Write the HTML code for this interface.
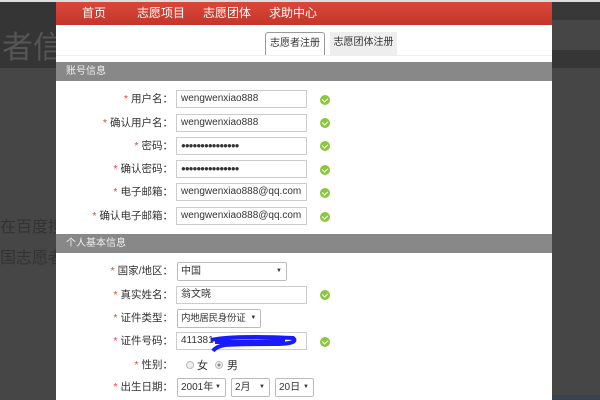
<!DOCTYPE html>
<html><head><meta charset="utf-8"><style>
*{margin:0;padding:0;box-sizing:border-box}
body{width:600px;height:400px;overflow:hidden;background:#464646;font-family:"Liberation Sans","Noto Sans CJK SC",sans-serif;position:relative}
.a{position:absolute}
.lbl{position:absolute;right:427px;font-size:10.5px;color:#333;white-space:nowrap;line-height:14px}
.lbl b{color:#e0463a;font-weight:normal;margin-right:3px}
.in{position:absolute;left:176px;width:131px;height:18px;border:1px solid #ccc;font-size:10px;color:#333;padding-left:4px;line-height:16px;background:#fff;white-space:nowrap;overflow:hidden}
.sel{position:absolute;height:19px;border:1px solid #bbb;border-radius:2px;font-size:10px;color:#333;padding-left:3px;line-height:17px;background:#fff;white-space:nowrap}
.sel:after{content:"▼";position:absolute;right:4px;top:0;font-size:6px}
.ok{position:absolute;left:320px;width:10px;height:10px;border-radius:50%;background:#8cc63f}
.ok:after{content:"";position:absolute;left:3px;top:2px;width:3px;height:4px;border:solid #fff;border-width:0 1.5px 1.5px 0;transform:rotate(45deg)}
.hd{position:absolute;left:56px;width:496px;height:19px;background:#888;color:#eee;font-size:10px;line-height:19px;padding-left:10px}
</style></head><body>
<div class="a" style="left:0;top:0;width:600px;height:2px;background:#ddd"></div>
<div class="a" style="left:0;top:2px;width:56px;height:66px;background:#353535"></div>
<div class="a" style="left:2px;top:22px;font-size:31px;color:#555;white-space:nowrap">者信</div>
<div class="a" style="left:0;top:213px;font-size:16px;color:#333;white-space:nowrap">在百度搜</div>
<div class="a" style="left:0;top:244px;font-size:16px;color:#333;white-space:nowrap">国志愿者</div>
<div class="a" style="left:552px;top:2px;width:48px;height:18px;background:#383838"></div>
<div class="a" style="left:552px;top:50px;width:48px;height:18px;background:#363636"></div>
<div class="a" style="left:552px;top:395px;width:48px;height:5px;background:#3a4250"></div>

<div class="a" style="left:56px;top:2px;width:496px;height:398px;background:#fff"></div>
<div class="a" style="left:56px;top:2px;width:496px;height:23px;background:linear-gradient(#d9473a,#c4362a);color:#fff;font-size:12px;line-height:22px">
<span class="a" style="left:26px">首页</span><span class="a" style="left:81px">志愿项目</span><span class="a" style="left:147px">志愿团体</span><span class="a" style="left:213px">求助中心</span></div>
<div class="a" style="left:265px;top:32px;width:60px;height:24px;border:1px solid #999;border-bottom:none;border-radius:3px 3px 0 0;font-size:10px;line-height:22px;text-align:center;color:#333;background:#fff">志愿者注册</div>
<div class="a" style="left:330px;top:32px;width:67px;height:23px;background:#eee;font-size:10px;line-height:22px;text-align:center;color:#333">志愿团体注册</div>
<div class="a" style="left:56px;top:55px;width:496px;height:1px;background:#eee"></div>

<div class="hd" style="top:62px">账号信息</div>
<div class="lbl" style="top:92px"><b>*</b>用户名：</div><div class="in" style="top:90px">wengwenxiao888</div><div class="ok" style="top:95px"></div>
<div class="lbl" style="top:116px"><b>*</b>确认用户名：</div><div class="in" style="top:114px">wengwenxiao888</div><div class="ok" style="top:118px"></div>
<div class="lbl" style="top:139px"><b>*</b>密码：</div><div class="in" style="top:137px;font-size:8px;letter-spacing:-1px">●●●●●●●●●●●●●●●</div><div class="ok" style="top:141px"></div>
<div class="lbl" style="top:162px"><b>*</b>确认密码：</div><div class="in" style="top:160px;font-size:8px;letter-spacing:-1px">●●●●●●●●●●●●●●●</div><div class="ok" style="top:165px"></div>
<div class="lbl" style="top:185px"><b>*</b>电子邮箱：</div><div class="in" style="top:183px">wengwenxiao888@qq.com</div><div class="ok" style="top:188px"></div>
<div class="lbl" style="top:209px"><b>*</b>确认电子邮箱：</div><div class="in" style="top:207px">wengwenxiao888@qq.com</div><div class="ok" style="top:212px"></div>

<div class="hd" style="top:234px">个人基本信息</div>
<div class="lbl" style="top:264px"><b>*</b>国家/地区：</div><div class="sel" style="left:177px;top:262px;width:110px">中国</div>
<div class="lbl" style="top:288px"><b>*</b>真实姓名：</div><div class="in" style="top:286px">翁文晓</div><div class="ok" style="top:290px"></div>
<div class="lbl" style="top:311px"><b>*</b>证件类型：</div><div class="sel" style="left:177px;top:309px;width:84px;font-size:9.5px;letter-spacing:-0.3px">内地居民身份证</div>
<div class="lbl" style="top:334px"><b>*</b>证件号码：</div><div class="in" style="top:332px">411381</div><div class="ok" style="top:337px"></div>
<svg class="a" style="left:205px;top:332px" width="95" height="22"><path d="M6 8 C20 5,50 4,88 6 C92 9,88 12,70 12 C50 12,30 12,20 13 C14 14,10 16,8 19 M10 10 L80 9" stroke="#1a1aff" stroke-width="4" fill="none"/></svg>
<div class="lbl" style="top:358px"><b>*</b>性别：</div>
<div class="a" style="left:186px;top:361px;width:8px;height:8px;border-radius:50%;border:1px solid #bbb;background:#eee"></div>
<div class="a" style="left:197px;top:357px;font-size:11px;color:#333">女</div>
<div class="a" style="left:215px;top:361px;width:8px;height:8px;border-radius:50%;border:1px solid #bbb;background:radial-gradient(#888 30%,#eee 40%)"></div>
<div class="a" style="left:227px;top:357px;font-size:11px;color:#333">男</div>
<div class="lbl" style="top:380px"><b>*</b>出生日期：</div>
<div class="sel" style="left:177px;top:378px;width:49px">2001年</div>
<div class="sel" style="left:231px;top:378px;width:39px">2月</div>
<div class="sel" style="left:275px;top:378px;width:39px">20日</div>
</body></html>
